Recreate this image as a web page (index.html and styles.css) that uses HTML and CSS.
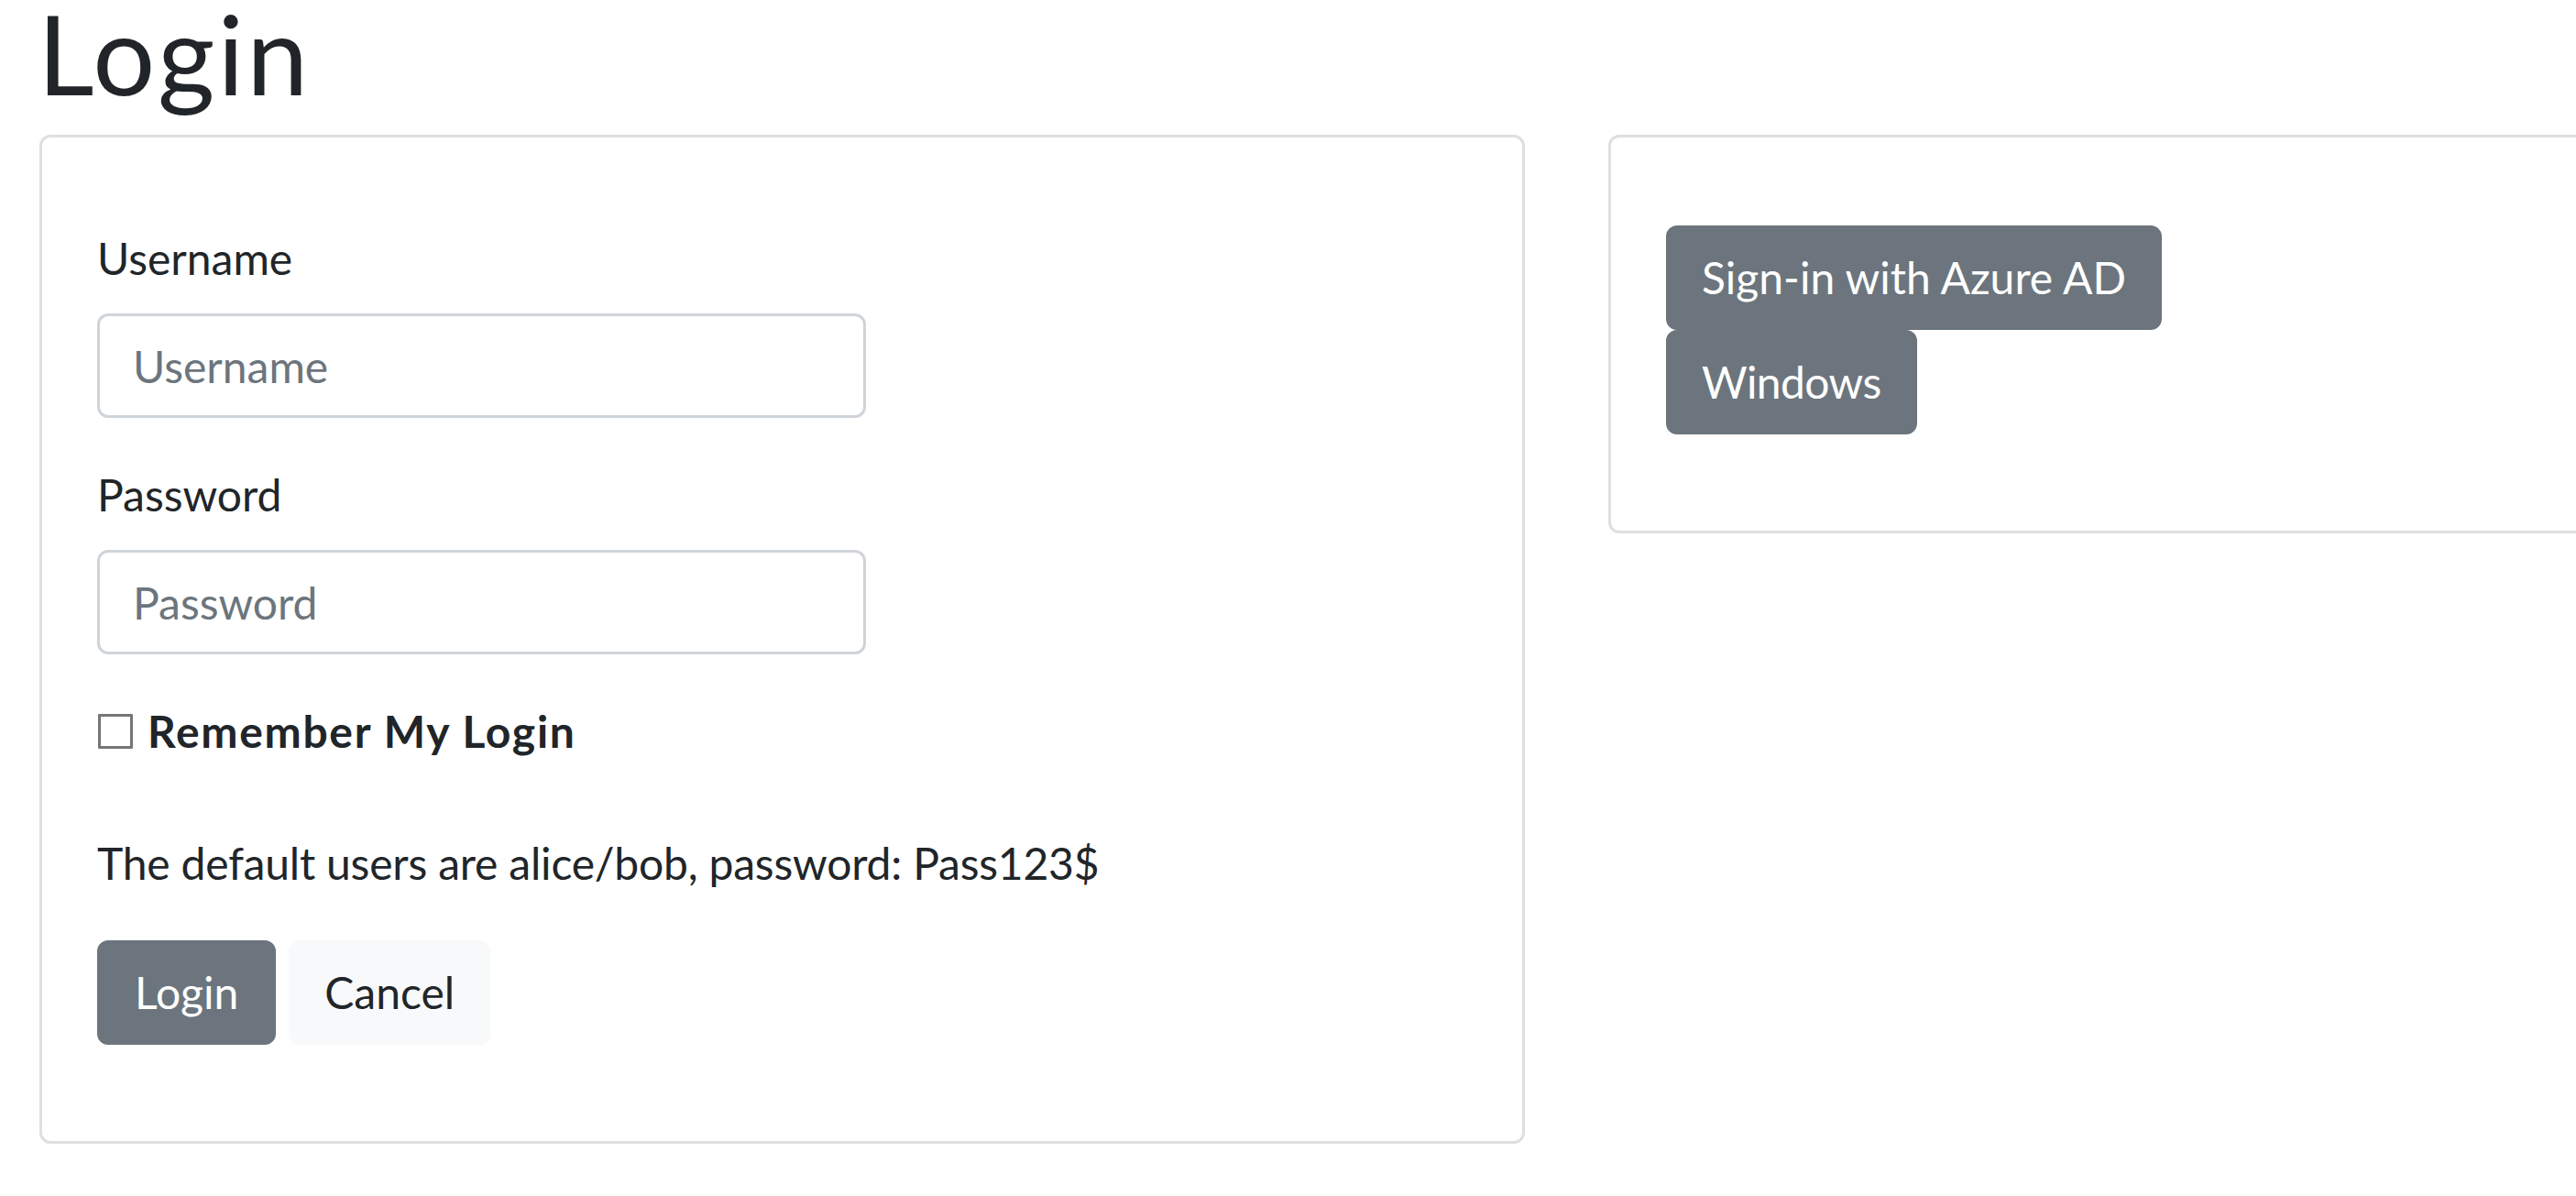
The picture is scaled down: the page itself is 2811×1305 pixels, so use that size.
FILE: index.html
```html
<!DOCTYPE html>
<html lang="en">
<head>
<meta charset="utf-8">
<title>Login</title>
<link rel="stylesheet" href="styles.css">
</head>
<body>
<div class="login-page">
  <h1 class="title">Login</h1>
  <div class="row">
    <div class="col">
      <div class="card">
        <div class="card-body">
          <form class="login-form">
            <div class="form-group">
              <label class="form-label" for="username">Username</label>
              <input class="form-control" id="username" type="text" placeholder="Username">
            </div>
            <div class="form-group">
              <label class="form-label" for="password">Password</label>
              <input class="form-control" id="password" type="password" placeholder="Password">
            </div>
            <div class="form-group">
              <label class="form-label check-label" for="remember"><input class="check" id="remember" type="checkbox"><strong>Remember My Login</strong></label>
            </div>
            <p class="hint">The default users are alice/bob, password: Pass123$</p>
            <div class="actions">
              <button class="btn btn-secondary" type="button">Login</button>
              <button class="btn btn-light" type="button">Cancel</button>
            </div>
          </form>
        </div>
      </div>
    </div>
    <div class="col">
      <div class="card">
        <div class="card-body">
          <div class="providers">
            <a class="btn btn-secondary">Sign-in with Azure AD</a>
            <a class="btn btn-secondary btn-narrow">Windows</a>
          </div>
        </div>
      </div>
    </div>
  </div>
</div>
</body>
</html>
```
FILE: styles.css
```css
html, body {
  margin: 0;
  overflow: hidden;
  background: #fff;
}
body {
  font-family: Lato, "Open Sans", sans-serif;
  font-size: 48px;
  line-height: 72px;
  color: #212529;
}
.login-page {
  width: 3400px;
}
.title {
  font-size: 120px;
  line-height: 110px;
  font-weight: 400;
  letter-spacing: 3px;
  margin: 3px 0 34px 41px;
  color: #212529;
}
.row {
  display: flex;
  gap: 91px;
  padding-left: 43px;
}
.col {
  width: 1621px;
  flex-shrink: 0;
}
.card {
  border: 3px solid #dfdfdf;
  border-radius: 12px;
  background: #fff;
}
.card-body {
  padding: 96px 60px 105px 60px;
}
.login-form {
  margin: 0;
}
.form-group {
  margin-bottom: 48px;
}
.form-label {
  display: inline-block;
  margin-bottom: 24px;
}
.form-control {
  display: block;
  box-sizing: border-box;
  width: 839px;
  height: 114px;
  padding: 18px 36px;
  font-family: inherit;
  font-size: 48px;
  line-height: 72px;
  color: #495057;
  background: #fff;
  border: 3px solid #ced4da;
  border-radius: 12px;
  margin: 0;
  outline: none;
}
.form-control::placeholder {
  color: #6c757d;
  opacity: 1;
}
.check {
  appearance: none;
  -webkit-appearance: none;
  display: inline-block;
  box-sizing: border-box;
  width: 38px;
  height: 38px;
  border: 3px solid #767676;
  border-radius: 1px;
  background: #fff;
  margin: 0 16px 0 1px;
  vertical-align: -1px;
}
.check-label strong {
  font-weight: 700;
  letter-spacing: 1.7px;
}
.hint {
  margin: 0 0 48px;
  letter-spacing: -0.2px;
}
.actions {
  display: flex;
  gap: 14px;
}
.btn {
  display: inline-block;
  box-sizing: border-box;
  height: 114px;
  padding: 18px 36px;
  font-family: inherit;
  font-size: 48px;
  line-height: 72px;
  font-weight: 400;
  border: 3px solid transparent;
  border-radius: 12px;
  text-decoration: none;
  cursor: pointer;
  white-space: nowrap;
}
.btn-secondary {
  color: #fff;
  background: #6c757d;
  border-color: #6c757d;
}
.btn-light {
  color: #212529;
  background: #f8f9fa;
  border-color: #f8f9fa;
}
.actions .btn-secondary {
  padding: 18px 38px;
}
.btn-narrow {
  letter-spacing: -0.6px;
}
.providers {
  display: flex;
  flex-direction: column;
  align-items: flex-start;
}
```
